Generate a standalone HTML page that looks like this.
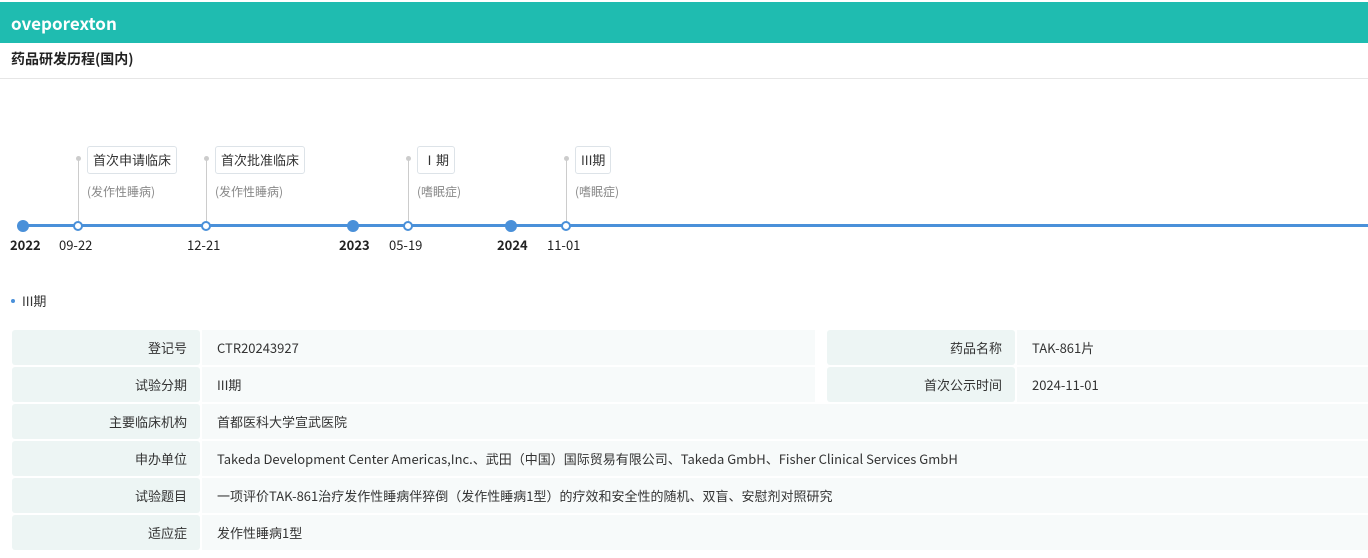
<!DOCTYPE html>
<html><head><meta charset="utf-8"><style>
*{margin:0;padding:0;box-sizing:border-box}
body{width:1368px;height:558px;overflow:hidden;background:#fff;font-family:"Noto Sans CJK SC","Liberation Sans",sans-serif;color:#333;position:relative}
.hd{position:absolute;left:0;top:2px;width:1368px;height:41px;background:#1fbcb0;color:#fff;font-weight:bold;font-size:17px;line-height:41px;padding-left:11px}
.tt{position:absolute;left:0;top:43px;width:1368px;height:36px;border-bottom:1px solid #e6e6e6;font-weight:bold;font-size:14px;line-height:32px;padding-left:11px;color:#222}
.line{position:absolute;left:20px;right:0;top:224px;height:3px;background:#4a90d9}
.big{position:absolute;top:220px;width:12px;height:12px;border-radius:50%;background:#4a90d9}
.sm{position:absolute;top:221px;width:10px;height:10px;border-radius:50%;background:#fff;border:2px solid #4a90d9}
.stem{position:absolute;width:1px;background:#ccc;top:160px;height:62px}
.sd{position:absolute;top:156px;width:5px;height:5px;border-radius:50%;background:#ccc}
.box{position:absolute;top:146px;height:28px;border:1px solid #dde3e8;border-radius:3px;font-size:13px;line-height:26px;padding:0 5px;color:#333}
.sub{position:absolute;top:183px;font-size:12px;color:#888}
.d{position:absolute;top:235px;font-size:13px;color:#222}
.y{font-weight:bold}
.dot{position:absolute;left:11px;top:299px;width:4px;height:4px;border-radius:50%;background:#4a90d9}
.ph{position:absolute;left:22px;top:291px;font-size:13px}
.r{position:absolute;height:35px;font-size:13px;line-height:35px}
.l{background:#edf5f4;text-align:right;padding-right:13px;border-radius:3px;color:#333}
.v{background:#f7fafa;padding-left:15px;color:#333}
</style></head><body>
<div class="hd">oveporexton</div>
<div class="tt">药品研发历程(国内)</div>
<div class="line"></div>
<div class="big" style="left:17px"></div>
<div class="big" style="left:347px"></div>
<div class="big" style="left:505px"></div>
<div class="stem" style="left:78px"></div><div class="sd" style="left:76px"></div>
<div class="stem" style="left:206px"></div><div class="sd" style="left:204px"></div>
<div class="stem" style="left:408px"></div><div class="sd" style="left:406px"></div>
<div class="stem" style="left:566px"></div><div class="sd" style="left:564px"></div>
<div class="sm" style="left:73px"></div>
<div class="sm" style="left:201px"></div>
<div class="sm" style="left:403px"></div>
<div class="sm" style="left:561px"></div>
<div class="box" style="left:87px">首次申请临床</div>
<div class="box" style="left:215px">首次批准临床</div>
<div class="box" style="left:417px">Ⅰ期</div>
<div class="box" style="left:575px">III期</div>
<div class="sub" style="left:87px">(发作性睡病)</div>
<div class="sub" style="left:215px">(发作性睡病)</div>
<div class="sub" style="left:417px">(嗜眠症)</div>
<div class="sub" style="left:575px">(嗜眠症)</div>
<div class="d y" style="left:10px">2022</div>
<div class="d" style="left:59px">09-22</div>
<div class="d" style="left:187px">12-21</div>
<div class="d y" style="left:339px">2023</div>
<div class="d" style="left:389px">05-19</div>
<div class="d y" style="left:497px">2024</div>
<div class="d" style="left:547px">11-01</div>
<div class="dot"></div><div class="ph">III期</div>
<div class="r l" style="left:12px;top:330px;width:188px">登记号</div>
<div class="r v" style="left:202px;top:330px;width:613px">CTR20243927</div>
<div class="r l" style="left:827px;top:330px;width:188px">药品名称</div>
<div class="r v" style="left:1017px;top:330px;width:351px">TAK-861片</div>
<div class="r l" style="left:12px;top:367px;width:188px">试验分期</div>
<div class="r v" style="left:202px;top:367px;width:613px">III期</div>
<div class="r l" style="left:827px;top:367px;width:188px">首次公示时间</div>
<div class="r v" style="left:1017px;top:367px;width:351px">2024-11-01</div>
<div class="r l" style="left:12px;top:404px;width:188px">主要临床机构</div>
<div class="r v" style="left:202px;top:404px;width:1166px">首都医科大学宣武医院</div>
<div class="r l" style="left:12px;top:441px;width:188px">申办单位</div>
<div class="r v" style="left:202px;top:441px;width:1166px">Takeda Development Center Americas,Inc.、武田（中国）国际贸易有限公司、Takeda GmbH、Fisher Clinical Services GmbH</div>
<div class="r l" style="left:12px;top:478px;width:188px">试验题目</div>
<div class="r v" style="left:202px;top:478px;width:1166px">一项评价TAK-861治疗发作性睡病伴猝倒（发作性睡病1型）的疗效和安全性的随机、双盲、安慰剂对照研究</div>
<div class="r l" style="left:12px;top:515px;width:188px">适应症</div>
<div class="r v" style="left:202px;top:515px;width:1166px">发作性睡病1型</div>
</body></html>
